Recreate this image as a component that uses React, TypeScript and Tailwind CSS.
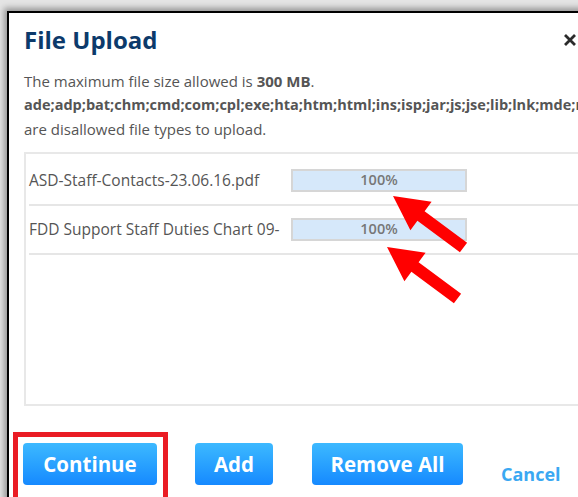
import React from "react";

const FONT = { fontFamily: "'Open Sans', Lato, 'Noto Sans', 'Liberation Sans', sans-serif" };

function CloseIcon() {
  return (
    <svg width="14" height="14" viewBox="0 0 14 14" className="block">
      <path d="M2 2 L12 12 M12 2 L2 12" stroke="#2b2b2b" strokeWidth="2.8" strokeLinecap="butt" />
    </svg>
  );
}

function UploadRow({ name }: { name: string }) {
  return (
    <div className="flex h-[49px] items-center border-b-2 border-[#e6e6e6]">
      <div className="w-[262px] whitespace-nowrap text-[15.5px] text-[#555]">{name}</div>
      <div className="flex h-[23px] w-[176px] items-center justify-center border-2 border-[#d6d6d6] bg-[#d6e8fa] text-[14.5px] font-semibold leading-none text-[#777]">
        100%
      </div>
    </div>
  );
}

function BlueButton({ label, width }: { label: string; width: string }) {
  return (
    <button
      className={`flex h-[42px] ${width} items-center justify-center rounded-[4px] bg-linear-to-b from-[#3db9ff] to-[#1689ff] text-[20.5px] font-bold text-white`}
    >
      {label}
    </button>
  );
}

// arrow shape pointing up-left, tip at (393,196)
const ARROW =
  "393,196 431.6,201.7 424.6,211.2 467.1,242.7 459.9,252.3 417.4,220.8 410.4,230.3";

export default function App() {
  return (
    <div className="relative h-[497px] w-[578px] overflow-hidden bg-[#e4e4e4]" style={FONT}>
      <div className="ml-[7px] mt-[11px] h-[520px] w-[620px] border-l-2 border-t-2 border-black bg-white pl-[15px] pt-[11px] shadow-[-3px_-3px_6px_rgba(0,0,0,0.35)]">
        <div className="flex h-8 items-center">
          <h1 className="text-[24px] font-bold leading-8 text-[#0c3a6b]">File Upload</h1>
        </div>

        <div className="mt-[13px] whitespace-nowrap leading-6 text-[#555]">
          <p className="text-[15px]">
            The maximum file size allowed is <span className="font-bold">300 MB</span>.
          </p>
          <p className="text-[14.5px] font-bold">
            ade;adp;bat;chm;cmd;com;cpl;exe;hta;htm;html;ins;isp;jar;js;jse;lib;lnk;mde;msc;msp;mst;pif;scr;sct;shb;sys;vb;vbe;vbs;vxd;wsc;wsf;wsh
          </p>
          <p className="text-[15px]">are disallowed file types to upload.</p>
        </div>

        <div className="mt-[11px] h-[254px] w-[600px] border-2 border-[#e8e8e8] pl-[3px] pt-[3px]">
          <UploadRow name="ASD-Staff-Contacts-23.06.16.pdf" />
          <UploadRow name="FDD Support Staff Duties Chart 09-" />
        </div>

        <div className="-ml-px mt-[37px] flex items-start">
          <BlueButton label="Continue" width="w-[134px]" />
          <div className="ml-[38px]">
            <BlueButton label="Add" width="w-[78px]" />
          </div>
          <div className="ml-[39px]">
            <BlueButton label="Remove All" width="w-[151px]" />
          </div>
          <a className="ml-[38px] mt-[19px] text-[18px] font-bold leading-6 text-[#3aa8f2]">Cancel</a>
        </div>
      </div>

      <div className="absolute left-[563px] top-[33px]">
        <CloseIcon />
      </div>

      <div className="pointer-events-none absolute left-[13px] top-[432px] h-[70px] w-[155px] border-[5px] border-[#ea1c24]" />

      <svg className="pointer-events-none absolute left-0 top-0" width="578" height="497">
        <polygon points={ARROW} fill="#ff0000" />
        <polygon points={ARROW} fill="#ff0000" transform="translate(-6 51)" />
      </svg>
    </div>
  );
}
